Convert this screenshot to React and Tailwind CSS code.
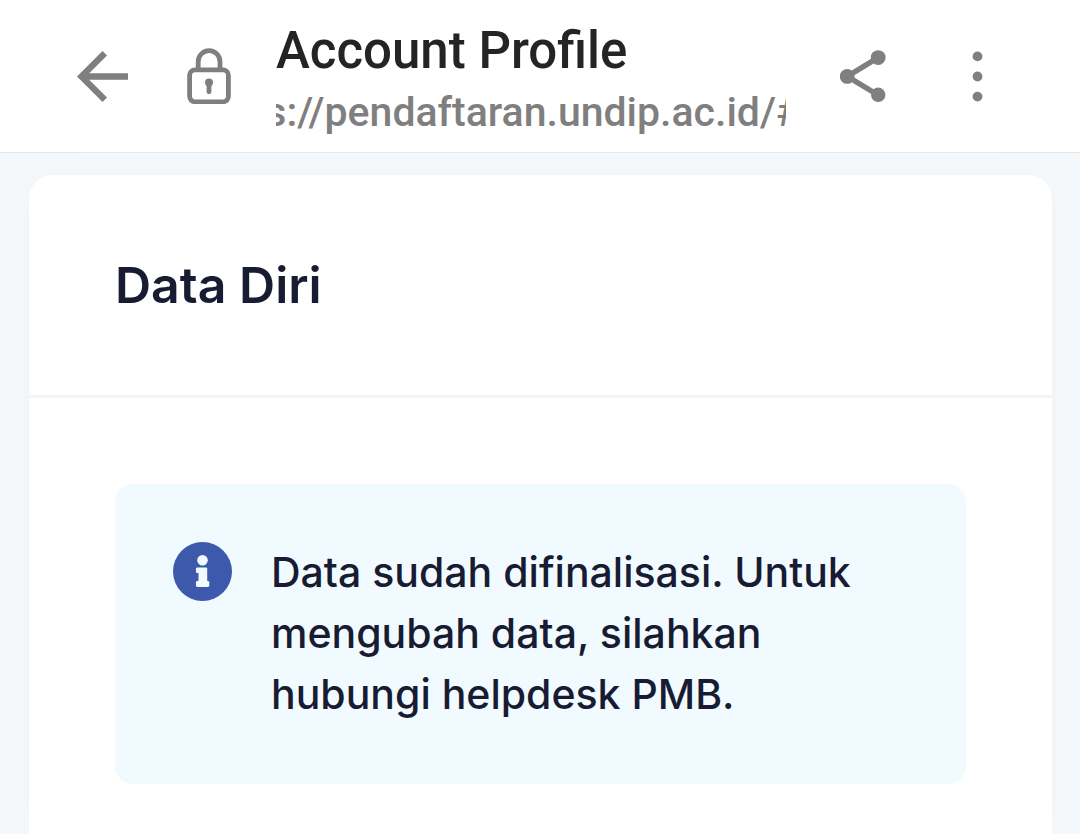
function BackIcon() {
  return (
    <svg viewBox="4 4 16 16" className="size-[51px]" fill="currentColor" aria-hidden="true">
      <path d="M20 11H7.83l5.59-5.59L12 4l-8 8 8 8 1.41-1.41L7.83 13H20v-2z" />
    </svg>
  );
}

function LockIcon() {
  return (
    <svg viewBox="0 0 44 56" className="h-14 w-11" fill="none" stroke="currentColor" strokeWidth="4.8" role="img" aria-label="Secure connection">
      <rect x="2.6" y="21.8" width="38.8" height="32" rx="5.5" />
      <path d="M11.2 21.5V13.7a10.9 11 0 0 1 21.8 0v7.8" />
      <circle cx="22" cy="34.6" r="4" fill="currentColor" stroke="none" />
      <path d="M22 36v7.8" strokeLinecap="round" />
    </svg>
  );
}

function ShareIcon() {
  return (
    <svg viewBox="0 0 46 52" className="h-[52px] w-[46px]" fill="currentColor" aria-hidden="true">
      <path d="M38 7.6 7.2 26.4 38 45" fill="none" stroke="currentColor" strokeWidth="5.4" />
      <circle cx="7.2" cy="26.4" r="7.4" />
      <circle cx="38.2" cy="7.6" r="7.4" />
      <circle cx="38.2" cy="44.8" r="7.2" />
    </svg>
  );
}

function MoreIcon() {
  return (
    <svg viewBox="0 0 11 52" className="h-[52px] w-[11px]" fill="currentColor" aria-hidden="true">
      <circle cx="5.5" cy="6.4" r="4.9" />
      <circle cx="5.5" cy="26.5" r="4.9" />
      <circle cx="5.5" cy="46.6" r="4.9" />
    </svg>
  );
}

function InfoIcon() {
  return (
    <svg viewBox="0 0 512 512" className="size-[59px] shrink-0 text-[#3d59ab]" fill="currentColor" aria-hidden="true">
      <circle cx="256" cy="256" r="256" />
      <circle cx="256" cy="159" r="46" fill="#f1faff" />
      <path
        fill="#f1faff"
        d="M211 222h74c7 0 12 5 12 12v104h6c7 0 12 5 12 12v28c0 7-5 12-12 12h-92c-7 0-12-5-12-12v-28c0-7 5-12 12-12h10v-68h-10c-7 0-12-5-12-12v-24c0-7 5-12 12-12z"
      />
    </svg>
  );
}

export default function App() {
  return (
    <div className="flex min-h-screen flex-col bg-[#f4f8fb] font-['Inter',sans-serif] text-[#181c32]">
      <header className="flex items-center border-b border-[#e4e5e6] bg-white pr-[97px] pl-[77px] text-[#7f7f7f]">
        <button type="button" aria-label="Back" className="shrink-0">
          <BackIcon />
        </button>
        <div className="ml-[59px] shrink-0">
          <LockIcon />
        </div>
        <div className="ml-[45px] min-w-0 flex-1 overflow-hidden pt-[21px] pb-[9px] font-['Roboto',sans-serif] font-medium whitespace-nowrap">
          <div className="text-[51px] leading-[60px] text-[#242424]">Account Profile</div>
          <div className="flex justify-center overflow-hidden pl-1 text-[41px] leading-[62px]">
            <span>s://pendaftaran.undip.ac.id/#</span>
          </div>
        </div>
        <button type="button" aria-label="Share" className="ml-[54px] shrink-0">
          <ShareIcon />
        </button>
        <button type="button" aria-label="More options" className="ml-[86px] shrink-0">
          <MoreIcon />
        </button>
      </header>

      <main className="flex flex-1 flex-col overflow-hidden px-7 pt-[22px] pl-[29px]">
        <section className="flex-1 rounded-t-3xl bg-white shadow-[0_0_40px_0_rgba(76,87,105,0.02)]">
          <div className="border-b-[3px] border-[#f3f4f6] px-[86px] py-20">
            <h1 className="text-[50px] leading-[60px] font-semibold">Data Diri</h1>
          </div>
          <div className="px-[86px] pt-[86px] pb-[50px]">
            <div role="status" className="flex items-start gap-[39px] rounded-[18px] bg-[#f1faff] px-[58px] pt-[58px] pb-[59px]">
              <InfoIcon />
              <p className="text-[41px] leading-[61px] font-medium">
                Data sudah difinalisasi. Untuk mengubah data, silahkan hubungi helpdesk PMB.
              </p>
            </div>
          </div>
        </section>
      </main>
    </div>
  );
}
